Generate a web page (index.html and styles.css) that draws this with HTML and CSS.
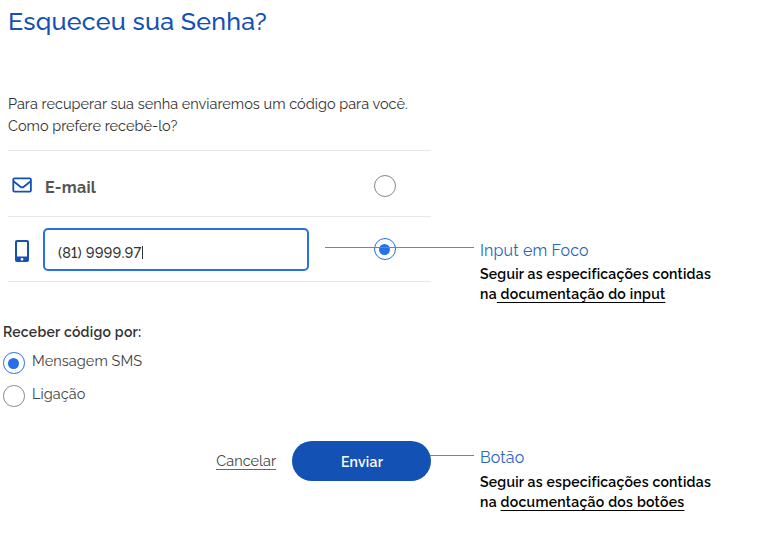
FILE: index.html
```
<!DOCTYPE html>
<html lang="pt-BR">
<head>
<meta charset="utf-8">
<title>Esqueceu sua Senha?</title>
<link rel="stylesheet" href="styles.css">
</head>
<body>
<div class="page">
  <main class="form">
    <h1 class="title"><span>Esqueceu sua Senha?</span></h1>
    <p class="intro"><span class="intro-a">Para recuperar sua senha enviaremos um código para você.</span><br><span class="intro-b">Como prefere recebê-lo?</span></p>
    <div class="row">
      <svg class="icon mail" viewBox="0 0 20 16" width="20" height="16" fill="none" stroke="#1351b4" stroke-width="1.8" stroke-linejoin="round"><rect x="1.3" y="1.4" width="17.6" height="13.2" rx="1.2"/><path d="M1.5 4.2 8.4 9.7Q10.1 11 11.8 9.7L18.7 4.2"/></svg>
      <span class="label">E-mail</span>
      <span class="radio"></span>
    </div>
    <div class="row">
      <svg class="icon phone" viewBox="0 0 14 22" width="14" height="22"><path fill="#1351b4" fill-rule="evenodd" d="M2 0H12Q14 0 14 2V20Q14 22 12 22H2Q0 22 0 20V2Q0 0 2 0ZM2.5 2Q2 2 2 2.5V16Q2 16.5 2.5 16.5H11.5Q12 16.5 12 16V2.5Q12 2 11.5 2ZM7 17.9A1.4 1.4 0 1 0 7 20.7A1.4 1.4 0 1 0 7 17.9Z"/></svg>
      <div class="input"><span class="value">(81) 9999.97</span><span class="caret"></span></div>
      <span class="radio on"></span>
    </div>
    <section class="via">
      <h2 class="via-title">Receber código por:</h2>
      <div class="option"><span class="radio on"></span><span class="sms">Mensagem SMS</span></div>
      <div class="option"><span class="radio"></span><span class="call">Ligação</span></div>
    </section>
    <div class="actions">
      <a class="cancel">Cancelar</a>
      <button class="send">Enviar</button>
    </div>
  </main>
  <aside class="notes">
    <section class="note">
      <h3 class="note-title focus">Input em Foco</h3>
      <p class="note-text"><span class="follow">Seguir as especificações contidas</span><br><span class="doc-a">na<u> documentação do input</u></span></p>
    </section>
    <section class="note">
      <h3 class="note-title button">Botão</h3>
      <p class="note-text"><span class="follow">Seguir as especificações contidas</span><br><span class="doc-b">na <u>documentação dos botões</u></span></p>
    </section>
  </aside>
  <i class="line line-input"></i>
  <i class="line line-button"></i>
</div>
</body>
</html>
```
FILE: styles.css
```
* { box-sizing: border-box; }
body { margin: 0; background: #fff; font-family: Raleway, Lato, sans-serif; font-variant-numeric: lining-nums; color: #333; }
h1, h2, h3, p { margin: 0; }
.page { position: relative; display: grid; grid-template-columns: 423px 1fr; column-gap: 49px; width: 768px; height: 546px; padding-left: 8px; overflow: hidden; }
.title { height: 93px; padding-top: 6px; font-size: 25px; line-height: 30px; font-weight: 500; color: #1351b4; letter-spacing: .22px; }
.intro { height: 58px; font-size: 14.5px; line-height: 22px; border-bottom: 1px solid #e8e8e8; color: #333; white-space: nowrap; letter-spacing: .01px; }
.row { display: flex; align-items: center; height: 65px; border-bottom: 1px solid #e8e8e8; }
.intro + .row { height: 66px; }
.icon { flex: none; }
.mail { margin: 2px 13px 0 4px; }
.phone { margin: 3px 14px 0 7px; }
.label { font-size: 16px; font-weight: 700; color: #555; padding-top: 8px; letter-spacing: .25px; }
.row .radio { position: relative; top: 0; margin-left: auto; margin-right: 35.5px; }
.intro + .row .radio { top: 2px; }
.radio { flex: none; display: flex; align-items: center; justify-content: center; width: 22px; height: 22px; border: 1px solid #888; border-radius: 50%; }
.radio.on { border-color: #2670e8; }
.radio.on::after { content: ""; width: 11px; height: 11px; border-radius: 50%; background: #2670e8; }
.input { display: flex; align-items: center; width: 266px; height: 43px; padding: 7px 13px 0; border: 2px solid #2670e8; border-radius: 5px; font-size: 14.5px; font-weight: 500; letter-spacing: .15px; }
.caret { width: 1px; height: 13px; background: #333; margin-left: 1px; }
.via { margin-left: -5px; padding-top: 39px; }
.via-title { font-size: 14px; line-height: 22px; font-weight: 600; margin-bottom: 9px; letter-spacing: .25px; }
.option { display: flex; align-items: center; gap: 7px; height: 22px; margin-bottom: 11px; font-size: 14.5px; color: #444; letter-spacing: .07px; }
.option span:last-child { padding-bottom: 5px; }
.option .radio { width: 21.5px; height: 21.5px; margin-right: .5px; }
.actions { display: flex; justify-content: flex-end; align-items: center; gap: 16px; margin-top: 34px; }
.cancel { font-size: 14.5px; line-height: 17px; border-bottom: 1px solid #666; color: #444; }
.send { width: 139px; height: 40px; padding: 1px 0 0 1px; border: 0; border-radius: 20px; background: #1351b4; color: #fff; font: 600 14px Raleway, Lato, sans-serif; letter-spacing: .25px; }
.notes { padding-top: 240px; }
.note { height: 207px; white-space: nowrap; }
.note + .note .note-text { padding-top: 3px; }
.note-title { font-size: 16px; line-height: 22px; font-weight: 400; color: #2864bd; letter-spacing: .13px; }
.note-text { font-size: 14px; line-height: 20px; font-weight: 600; color: #000; padding-top: 2px; letter-spacing: .23px; }
.doc-a, .doc-b { letter-spacing: .28px; }
.note-text u { text-decoration-thickness: 1px; text-underline-offset: 3px; text-decoration-skip-ink: none; }
.line { position: absolute; height: 1px; background: #40a090; }
.line-input { left: 325px; top: 247px; width: 149px; }
.line-button { left: 430px; top: 455px; width: 44px; }
```
